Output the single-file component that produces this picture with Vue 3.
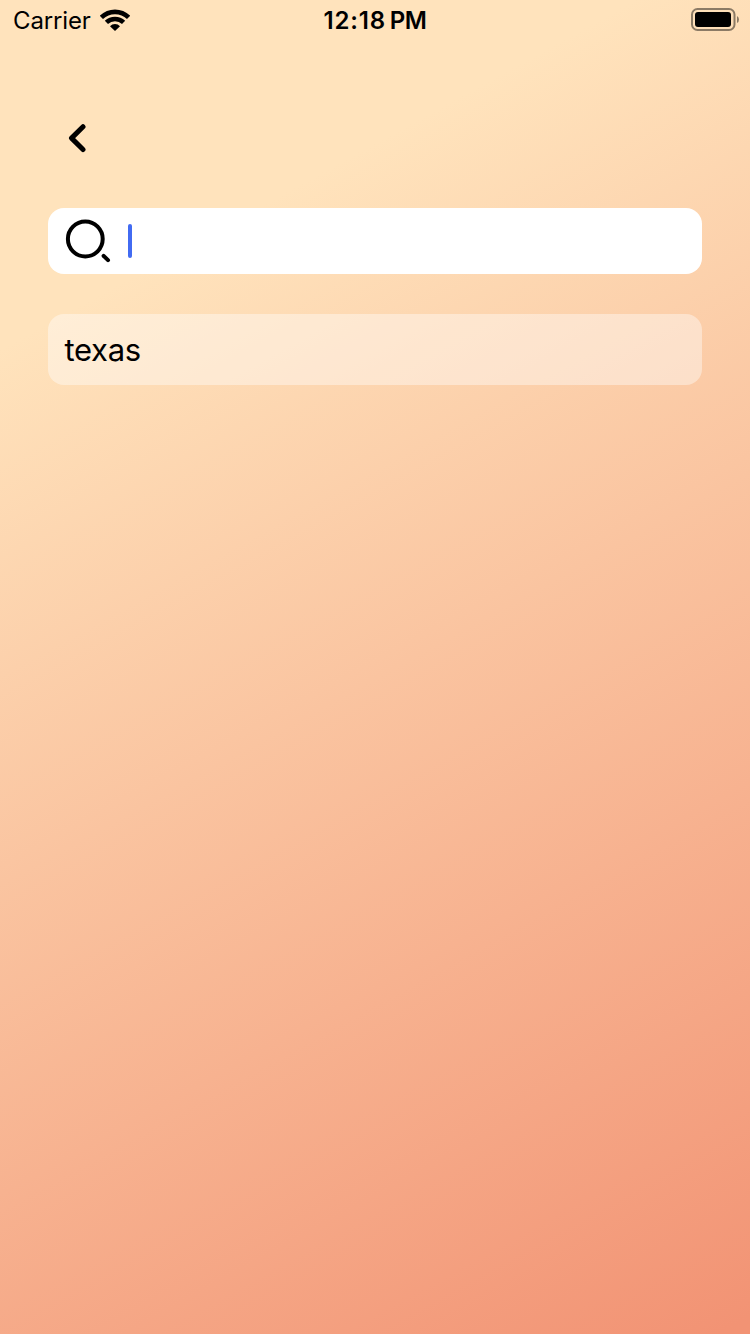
<script setup>
const recentSearches = ['texas']
</script>

<template>
  <main class="screen">
    <header class="status">
      <div class="network">
        <span class="carrier">Carrier</span>
        <svg class="wifi" width="30" height="22" viewBox="0 0 30 22">
          <g fill="none" stroke="#000" stroke-width="4.6">
            <path d="M1.4 8.4 A19.4 19.4 0 0 1 28.6 8.4" />
            <path d="M6.4 13.4 A12.4 12.4 0 0 1 23.6 13.4" />
          </g>
          <path d="M15 22 L10 17.2 A7 7 0 0 1 20 17.2 Z" />
        </svg>
      </div>
      <span class="time">12:18<span class="meridiem">PM</span></span>
      <svg class="battery" width="49" height="24" viewBox="0 0 49 24">
        <rect x="1" y="1" width="42.5" height="21" rx="5.5" fill="none" stroke="#000" stroke-opacity="0.45" stroke-width="2" />
        <rect x="4" y="4" width="36" height="15" rx="3" />
        <path d="M46 8 Q48 9 48 11.5 Q48 14 46 15 Z" fill-opacity="0.45" />
      </svg>
    </header>
    <nav class="nav">
      <button class="back" aria-label="Back">
        <svg width="18" height="29" viewBox="0 0 18 29">
          <path d="M15 2.7 L3.5 14.1 L15 25.5" fill="none" stroke="#000" stroke-width="5" stroke-linecap="round" stroke-linejoin="round" />
        </svg>
      </button>
    </nav>
    <div class="search">
      <svg width="46" height="46" viewBox="0 0 46 46" fill="none" stroke="#000" stroke-width="4" stroke-linecap="round">
        <circle cx="20.3" cy="21" r="17.4" />
        <path d="M38.6 37.8 L43 42.2" />
      </svg>
      <span class="caret"></span>
    </div>
    <ul class="results">
      <li v-for="item in recentSearches" :key="item">{{ item }}</li>
    </ul>
  </main>
</template>

<style>
body {
  margin: 0;
}
</style>

<style scoped>
.screen {
  box-sizing: border-box;
  width: 750px;
  height: 1334px;
  overflow: hidden;
  color: #000;
  font-family: Inter, "Liberation Sans", sans-serif;
  background: linear-gradient(151.2deg, #ffe3bc 20%, #f29374 99%);
}
.status {
  display: grid;
  grid-template-columns: 1fr auto 1fr;
  align-items: center;
  height: 40px;
  padding: 0 10px 0 13px;
}
.network {
  display: flex;
  align-items: center;
  gap: 9px;
}
.carrier {
  font-size: 24px;
  letter-spacing: -0.15px;
  line-height: 40px;
  padding-top: 1px;
  margin-bottom: -1px;
}
.time {
  font-size: 24px;
  font-weight: 600;
  letter-spacing: 0.8px;
  line-height: 40px;
  padding-top: 1px;
  margin: 0 0 -1px -3px;
}
.meridiem {
  margin-left: 4px;
  letter-spacing: -0.5px;
}
.battery {
  justify-self: end;
}
.nav {
  height: 168px;
  box-sizing: border-box;
  padding: 84px 0 0 68px;
}
.back {
  display: block;
  padding: 0;
  border: 0;
  background: none;
}
.back svg {
  display: block;
}
.search {
  box-sizing: border-box;
  display: flex;
  align-items: center;
  gap: 17px;
  height: 66px;
  margin: 0 48px;
  padding-left: 17px;
  border-radius: 16px;
  background: #fff;
}
.caret {
  width: 4px;
  height: 34px;
  border-radius: 2px;
  background: #426bf2;
}
.results {
  margin: 40px 48px 0;
  padding: 0;
  list-style: none;
}
.results li {
  box-sizing: border-box;
  height: 71px;
  padding-left: 16.5px;
  border-radius: 16px;
  background: rgba(255, 255, 255, 0.4);
  font-size: 31px;
  letter-spacing: -0.3px;
  line-height: 72px;
}
</style>
